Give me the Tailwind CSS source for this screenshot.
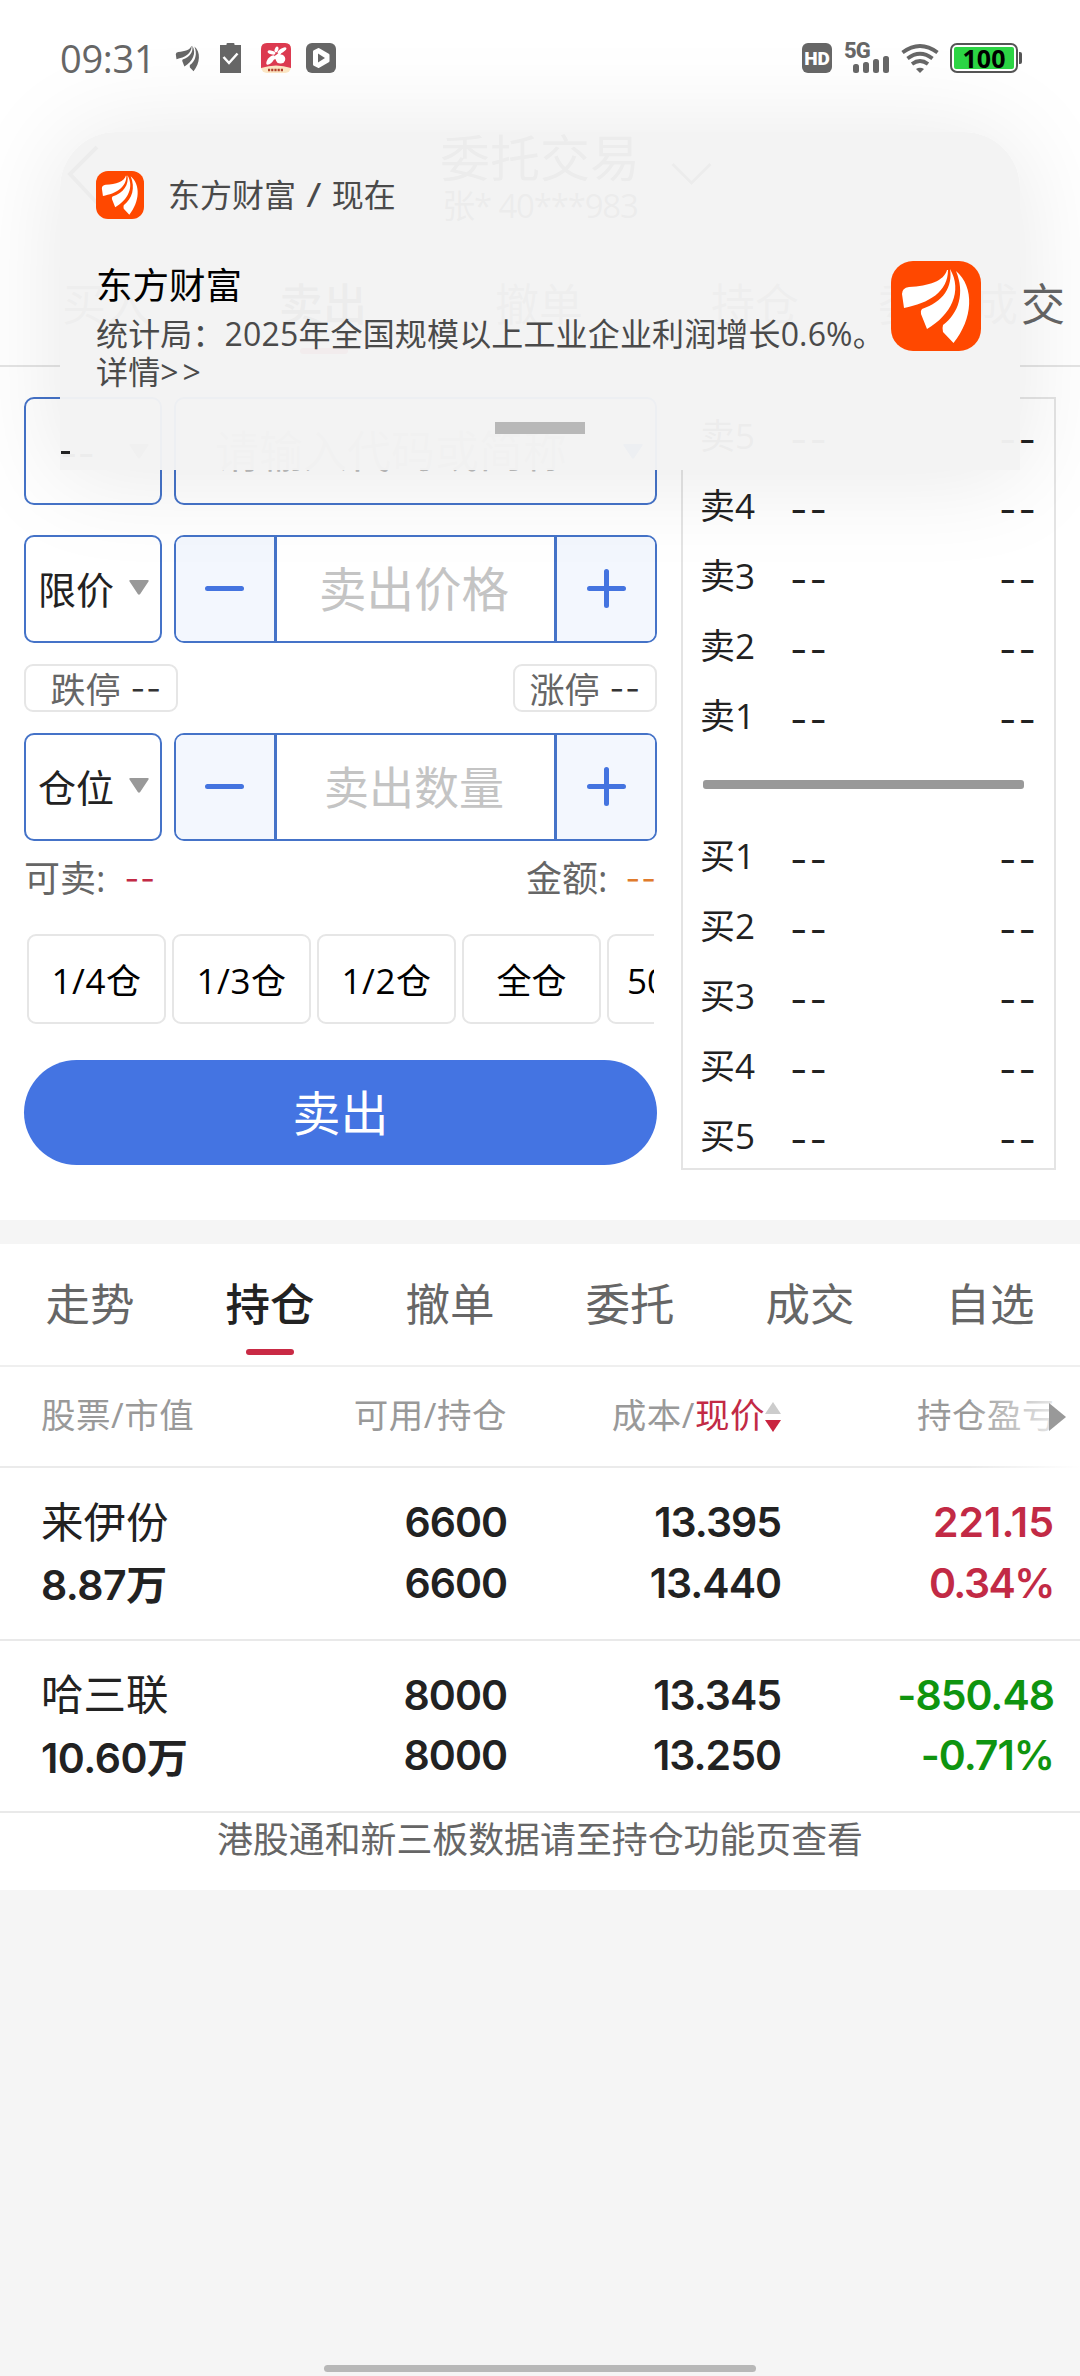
<!DOCTYPE html>
<html lang="zh-CN">
  <head>
    <meta charset="UTF-8" />
    <meta name="viewport" content="width=device-width, initial-scale=1.0" />
    <script src="https://cdn.jsdelivr.net/npm/@tailwindcss/browser@4"></script>
    <title>委托交易</title>
  </head>
  <body class="bg-white">
    <!-- shared icons -->
    <svg class="hidden">
      <symbol id="wing" viewBox="0 0 90 90">
        <path d="M56 9C53 20 38 25 18 26Q11 27 11 33L13 47C38 42 57 31 57 9z" />
        <path d="M59 8C62 26 52 41 31 48Q29 50 30 53L36 68C60 54 72 30 59 8z" />
        <path d="M65 10C74 32 68 52 52 64Q51 67 52 71L62.5 82C82 58 84 26 65 10z" />
      </symbol>
      <symbol id="caret" viewBox="0 0 20 15">
        <path d="M1.5 0h17q2 0 .8 1.8L11.200 14q-1.200 1.500-2.400 0L.7 1.800Q-.5 0 1.500 0z" />
      </symbol>
      <symbol id="plus" viewBox="0 0 39 39">
        <path d="M2.500 19.500h34M19.500 2.500v34" fill="none" stroke="currentColor" stroke-width="5" stroke-linecap="round" />
      </symbol>
      <symbol id="minus" viewBox="0 0 39 39">
        <path d="M2.500 19.500h34" fill="none" stroke="currentColor" stroke-width="5" stroke-linecap="round" />
      </symbol>
    </svg>

    <div class="relative flex h-[2376px] w-[1080px] flex-col overflow-hidden bg-white font-['Open_Sans','Noto_Sans_CJK_SC',sans-serif] text-[#222]">
      <!-- status bar -->
      <div class="relative z-20 flex h-[116px] shrink-0 items-center justify-between pr-[58px] pl-[60px] text-[#666]">
        <div class="flex items-center">
          <span class="w-[116px] text-[38px] leading-none font-medium tracking-[-0.300px]">09:31</span>
          <svg class="-ml-1 size-[31px] fill-current"><use href="#wing" /></svg>
          <svg class="ml-[17px] h-[30px] w-[21px]" viewBox="0 0 21 30">
            <path d="M0 2h6.500V1q0-1 1-1h6q1 0 1 1v1H21v28H0z" fill="#666" />
            <path d="M3.500 14l5.500 6 8.500-9.500" fill="none" stroke="#fff" stroke-width="2.500" />
          </svg>
          <svg class="ml-5 size-[30px]" viewBox="0 0 30 30">
            <rect width="30" height="30" rx="6" fill="#fbe6c4" />
            <path d="M6 0h18q6 0 6 6v19Q15 20 0 25V6Q0 0 6 0z" fill="#dc3a50" />
            <g fill="#fff">
              <ellipse cx="10.500" cy="9.500" rx="4" ry="1.900" transform="rotate(14 10.500 9.500)" />
              <ellipse cx="15.500" cy="6.500" rx="1.700" ry="3" transform="rotate(22 15.500 6.500)" />
              <ellipse cx="21" cy="7.500" rx="5" ry="2" transform="rotate(-32 21 7.500)" />
              <ellipse cx="9.500" cy="17" rx="5.800" ry="2.600" transform="rotate(-50 9.500 17)" />
              <ellipse cx="19.500" cy="16" rx="4.800" ry="4.500" />
              <path d="M8 17L22 7l-5 9z" />
            </g>
            <path d="M7 27h16" stroke="#b0402a" stroke-width="2.500" stroke-dasharray="2.200 1" />
          </svg>
          <svg class="ml-[15px] size-[30px]" viewBox="0 0 30 30">
            <rect width="30" height="30" rx="6" fill="#666" />
            <path d="M8.500 8.500v13l4 2 9.500-5.500v-6L12.500 6.500z" fill="#fff" stroke="#fff" stroke-width="3" stroke-linejoin="round" />
            <path d="M12 10.500l7 4.500-7 4.500z" fill="#666" />
          </svg>
        </div>
        <div class="flex items-center">
          <div class="flex h-[30px] w-[30px] items-center justify-center rounded-[6px] bg-[#666] font-['Roboto'] text-[19px] leading-none font-black text-white">HD</div>
          <div class="relative ml-3 h-[30px] w-[45px]">
            <span class="absolute -top-[3px] left-0 font-['Roboto'] text-[22px] leading-none font-extrabold tracking-[-1px]">5G</span>
            <svg class="absolute right-0 bottom-0 h-[17px] w-[36px]" viewBox="0 0 36 17" fill="#666">
              <rect x="0" y="8" width="6" height="9" rx="2.500" />
              <rect x="10" y="6" width="6" height="11" rx="2.500" />
              <rect x="20" y="3" width="6" height="14" rx="2.500" />
              <rect x="30" y="0" width="6" height="17" rx="2.500" />
            </svg>
          </div>
          <svg class="ml-3 h-[30px] w-[38px]" viewBox="0 0 38 30">
            <g fill="none" stroke="#666" stroke-width="3.800">
              <path d="M1.500 9.500Q19-3.500 36.500 9.500" />
              <path d="M6.500 15.500Q19 6 31.500 15.500" />
              <path d="M11 21Q19 15 27 21" />
            </g>
            <path d="M15 26q4-2.500 8 0l-4 4z" fill="#666" />
          </svg>
          <div class="ml-[11px] flex h-[30px] w-[68px] items-center justify-center rounded-[7px] border-2 border-[#555] bg-white p-[2px]">
            <div class="flex h-full w-full items-center justify-center rounded-[2px] bg-[#2cd544] font-['Open_Sans'] text-[25px] leading-none font-bold text-black">100</div>
          </div>
          <div class="ml-px h-[12px] w-[3px] rounded-r-[2px] bg-[#555]"></div>
        </div>
      </div>

      <!-- page header -->
      <div class="relative flex h-[120px] shrink-0 flex-col items-center pt-[17px]">
        <svg class="absolute top-[29px] left-[67px] h-[62px] w-[32px]" viewBox="0 0 32 62">
          <path d="M30 2L3 29l27 29" fill="none" stroke="#333" stroke-width="4" />
        </svg>
        <div class="text-[50px] leading-[50px]">委托交易</div>
        <div class="mt-[5px] text-[33px] leading-[36px] tracking-[-1.200px]">张* 40***983</div>
        <svg class="absolute top-[46px] left-[671px] h-[24px] w-[41px]" viewBox="0 0 41 24">
          <path d="M1.500 2l19 19 19-19" fill="none" stroke="#333" stroke-width="3" />
        </svg>
      </div>
      <div class="relative flex h-[131px] shrink-0 items-start border-b-2 border-[#e4e4e4] pt-[45px] pl-[62px] text-[44px] leading-[46px] text-[#666]">
        <div class="w-[217px]">买入</div>
        <div class="relative w-[216px] font-medium text-[#222]">
          卖出
          <div class="absolute top-[67px] left-[21px] h-[6px] w-[48px] rounded-full bg-[#c92a45]"></div>
        </div>
        <div class="w-[216px]">撤单</div>
        <div class="w-[167px]">持仓</div>
        <div class="w-[96px]">委托</div>
        <div class="tracking-[3px] whitespace-nowrap">成交</div>
      </div>

      <!-- order form and quotes -->
      <div class="flex h-[853px] shrink-0 gap-6 pt-[30px] pl-6">
        <div class="w-[633px]">
          <div class="flex gap-3">
            <div class="flex h-[108px] w-[138px] items-center justify-between rounded-[10px] border-2 border-[#4573c8] pr-[11px] pl-[34px]">
              <span class="pt-[3px] font-['Inter'] text-[38px] leading-none">--</span>
              <svg class="h-[15px] w-[20px] fill-[#999]"><use href="#caret" /></svg>
            </div>
            <div class="flex h-[108px] w-[483px] items-center justify-between rounded-[10px] border-2 border-[#4573c8] pr-[12px] pl-[39px]">
              <span class="text-[44px] leading-none text-[#bbb]">请输入代码或简称</span>
              <svg class="h-[15px] w-[20px] fill-[#4573c8]"><use href="#caret" /></svg>
            </div>
          </div>

          <div class="mt-[30px] flex gap-3">
            <div class="flex h-[108px] w-[138px] items-center justify-between rounded-[10px] border-2 border-[#4573c8] pr-[11px] pl-[12px]">
              <span class="text-[38px] leading-none">限价</span>
              <svg class="-mt-[3px] h-[15px] w-[20px] fill-[#999]"><use href="#caret" /></svg>
            </div>
            <div class="flex h-[108px] w-[483px] overflow-hidden rounded-[10px] border-2 border-[#4573c8]">
              <div class="flex w-[101px] items-center justify-center border-r-[3px] border-[#4573c8] bg-[#f3f7fe] text-[#4474e0]">
                <svg class="-mt-[2px] -ml-[2px] size-[39px]"><use href="#minus" /></svg>
              </div>
              <div class="flex flex-1 items-center justify-center pr-[3px] text-[47.500px] leading-none text-[#c4c4c4]">卖出价格</div>
              <div class="flex w-[101px] items-center justify-center border-l-[3px] border-[#4573c8] bg-[#f3f7fe] text-[#4474e0]">
                <svg class="-mt-[2px] size-[39px]"><use href="#plus" /></svg>
              </div>
            </div>
          </div>

          <div class="mt-[21px] flex justify-between text-[35px] leading-none text-[#666]">
            <div class="flex h-[48px] w-[154px] items-center justify-end gap-[10px] rounded-[9px] border-2 border-[#e6e6e6] pt-[2px] pr-[14px]">
              <span>跌停</span><span class="font-['Inter'] text-[32px] tracking-[1px] text-[#333]">--</span>
            </div>
            <div class="flex h-[48px] w-[144px] items-center justify-end gap-[10px] rounded-[9px] border-2 border-[#e6e6e6] pt-[2px] pr-[14px]">
              <span>涨停</span><span class="font-['Inter'] text-[32px] tracking-[1px] text-[#333]">--</span>
            </div>
          </div>

          <div class="mt-[21px] flex gap-3">
            <div class="flex h-[108px] w-[138px] items-center justify-between rounded-[10px] border-2 border-[#4573c8] pr-[11px] pl-[12px]">
              <span class="text-[38px] leading-none">仓位</span>
              <svg class="-mt-[3px] h-[15px] w-[20px] fill-[#999]"><use href="#caret" /></svg>
            </div>
            <div class="flex h-[108px] w-[483px] overflow-hidden rounded-[10px] border-2 border-[#4573c8]">
              <div class="flex w-[101px] items-center justify-center border-r-[3px] border-[#4573c8] bg-[#f3f7fe] text-[#4474e0]">
                <svg class="-mt-[2px] -ml-[2px] size-[39px]"><use href="#minus" /></svg>
              </div>
              <div class="flex flex-1 items-center justify-center pr-[3px] text-[45px] leading-none text-[#c4c4c4]">卖出数量</div>
              <div class="flex w-[101px] items-center justify-center border-l-[3px] border-[#4573c8] bg-[#f3f7fe] text-[#4474e0]">
                <svg class="-mt-[2px] size-[39px]"><use href="#plus" /></svg>
              </div>
            </div>
          </div>

          <div class="mt-[20px] flex justify-between text-[36px] leading-[36px] text-[#666]">
            <div class="flex gap-[19px]"><span>可卖:</span><span class="font-['Inter'] text-[32px] tracking-[1px] text-[#c22a45]">--</span></div>
            <div class="flex gap-[18px]"><span>金额:</span><span class="font-['Inter'] text-[32px] tracking-[1px] text-[#e07b2c]">--</span></div>
          </div>

          <div class="mt-[37px] ml-[3px] flex w-[627px] gap-[6px] overflow-hidden text-[35px] leading-none text-black">
            <div class="flex h-[90px] w-[139px] shrink-0 items-center justify-center rounded-[9px] border-2 border-[#e6e6e6] pt-[2px] tracking-[0.500px]">1/4仓</div>
            <div class="flex h-[90px] w-[139px] shrink-0 items-center justify-center rounded-[9px] border-2 border-[#e6e6e6] pt-[2px] tracking-[0.500px]">1/3仓</div>
            <div class="flex h-[90px] w-[139px] shrink-0 items-center justify-center rounded-[9px] border-2 border-[#e6e6e6] pt-[2px] tracking-[0.500px]">1/2仓</div>
            <div class="flex h-[90px] w-[139px] shrink-0 items-center justify-center rounded-[9px] border-2 border-[#e6e6e6] pt-[2px]">全仓</div>
            <div class="flex h-[90px] w-[139px] shrink-0 items-center rounded-[9px] border-2 border-[#e6e6e6] pt-[2px] pl-[18px]">500股</div>
          </div>

          <div class="mt-9 flex h-[105px] items-center justify-center rounded-full bg-[#4474e2] text-[48px] leading-none text-white">卖出</div>
        </div>

        <div class="flex h-[773px] w-[375px] flex-col border-2 border-[#e4e4e4] pr-[16px] pl-[17px] text-[35px] leading-none">
          <div class="flex h-[70px] shrink-0 items-center"><span class="w-[90px] pt-[2px]">卖5</span><span class="pt-[10px] font-['Inter'] text-[38px] tracking-[2px]">--</span><span class="ml-auto pt-[10px] font-['Inter'] text-[38px] tracking-[2px]">--</span></div>
          <div class="flex h-[70px] shrink-0 items-center"><span class="w-[90px] pt-[2px]">卖4</span><span class="pt-[10px] font-['Inter'] text-[38px] tracking-[2px]">--</span><span class="ml-auto pt-[10px] font-['Inter'] text-[38px] tracking-[2px]">--</span></div>
          <div class="flex h-[70px] shrink-0 items-center"><span class="w-[90px] pt-[2px]">卖3</span><span class="pt-[10px] font-['Inter'] text-[38px] tracking-[2px]">--</span><span class="ml-auto pt-[10px] font-['Inter'] text-[38px] tracking-[2px]">--</span></div>
          <div class="flex h-[70px] shrink-0 items-center"><span class="w-[90px] pt-[2px]">卖2</span><span class="pt-[10px] font-['Inter'] text-[38px] tracking-[2px]">--</span><span class="ml-auto pt-[10px] font-['Inter'] text-[38px] tracking-[2px]">--</span></div>
          <div class="flex h-[70px] shrink-0 items-center"><span class="w-[90px] pt-[2px]">卖1</span><span class="pt-[10px] font-['Inter'] text-[38px] tracking-[2px]">--</span><span class="ml-auto pt-[10px] font-['Inter'] text-[38px] tracking-[2px]">--</span></div>
          <div class="flex h-[70px] shrink-0 items-center pl-[3px]"><div class="h-[9px] w-[321px] rounded-[3px] bg-[#999]"></div></div>
          <div class="flex h-[70px] shrink-0 items-center"><span class="w-[90px] pt-[2px]">买1</span><span class="pt-[10px] font-['Inter'] text-[38px] tracking-[2px]">--</span><span class="ml-auto pt-[10px] font-['Inter'] text-[38px] tracking-[2px]">--</span></div>
          <div class="flex h-[70px] shrink-0 items-center"><span class="w-[90px] pt-[2px]">买2</span><span class="pt-[10px] font-['Inter'] text-[38px] tracking-[2px]">--</span><span class="ml-auto pt-[10px] font-['Inter'] text-[38px] tracking-[2px]">--</span></div>
          <div class="flex h-[70px] shrink-0 items-center"><span class="w-[90px] pt-[2px]">买3</span><span class="pt-[10px] font-['Inter'] text-[38px] tracking-[2px]">--</span><span class="ml-auto pt-[10px] font-['Inter'] text-[38px] tracking-[2px]">--</span></div>
          <div class="flex h-[70px] shrink-0 items-center"><span class="w-[90px] pt-[2px]">买4</span><span class="pt-[10px] font-['Inter'] text-[38px] tracking-[2px]">--</span><span class="ml-auto pt-[10px] font-['Inter'] text-[38px] tracking-[2px]">--</span></div>
          <div class="flex h-[70px] shrink-0 items-center"><span class="w-[90px] pt-[2px]">买5</span><span class="pt-[10px] font-['Inter'] text-[38px] tracking-[2px]">--</span><span class="ml-auto pt-[10px] font-['Inter'] text-[38px] tracking-[2px]">--</span></div>
        </div>
      </div>

      <div class="h-6 shrink-0 bg-[#f5f5f5]"></div>

      <!-- holdings -->
      <div class="grid h-[123px] shrink-0 grid-cols-6 border-b-2 border-[#efefef] pt-[37px] text-center text-[44.500px] leading-[46px] text-[#666]">
        <div>走势</div>
        <div class="flex flex-col items-center font-medium text-[#222]">
          持仓
          <div class="mt-[22px] h-[6px] w-[48px] rounded-full bg-[#c92a45]"></div>
        </div>
        <div>撤单</div>
        <div>委托</div>
        <div>成交</div>
        <div>自选</div>
      </div>
      <div class="relative grid h-[101px] shrink-0 grid-cols-[300px_207px_274px_299px] items-center border-b-2 border-[#ebebeb] pb-[3px] text-[34.500px] leading-none tracking-[0.500px] text-[#999]">
        <div class="pl-[41px]">股票/市值</div>
        <div class="text-right">可用/持仓</div>
        <div class="flex items-center justify-end">
          <span>成本/<span class="text-[#c22a45]">现价</span></span>
          <svg class="mt-[3px] h-[30px] w-[16px]" viewBox="0 0 16 30">
            <path d="M8 0l8 12H0z" fill="#ccc" />
            <path d="M0 18h16L8 30z" fill="#c9243f" />
          </svg>
        </div>
        <div class="pl-[136px] whitespace-nowrap">持仓盈亏</div>
        <div class="absolute top-0 right-0 h-[101px] w-[112px] bg-linear-to-r from-white/0 to-white"></div>
        <svg class="absolute top-[36px] right-[14px] h-[28px] w-[17px]" viewBox="0 0 17 28"><path d="M0 0l17 14L0 28z" fill="#999" /></svg>
      </div>

      <div class="grid h-[173px] shrink-0 grid-cols-[300px_207px_274px_273px] border-b-2 border-[#e9e9e9] pt-[24px] text-right font-['Inter','Noto_Sans_CJK_SC',sans-serif] text-[41px] leading-[61px] font-semibold tracking-[-1px]">
        <div class="pl-[41px] text-left"><div class="text-[42.500px] font-normal tracking-normal">来伊份</div><div class="pt-[2px] tracking-[-0.500px]">8.87万</div></div>
        <div><div>6600</div><div>6600</div></div>
        <div><div>13.395</div><div>13.440</div></div>
        <div class="text-[#c22a45]"><div class="tracking-normal">221.15</div><div class="tracking-[-1.500px]">0.34%</div></div>
      </div>
      <div class="grid h-[172px] shrink-0 grid-cols-[300px_207px_274px_273px] border-b-2 border-[#e9e9e9] pt-[24px] text-right font-['Inter','Noto_Sans_CJK_SC',sans-serif] text-[41px] leading-[60px] font-semibold tracking-[-1px]">
        <div class="pl-[41px] text-left"><div class="text-[42.500px] font-normal tracking-normal">哈三联</div><div class="pt-[3px] tracking-[-0.500px]">10.60万</div></div>
        <div><div>8000</div><div>8000</div></div>
        <div><div>13.345</div><div>13.250</div></div>
        <div class="text-[#0f940f]"><div>-850.48</div><div>-0.71%</div></div>
      </div>
      <div class="h-[77px] shrink-0 pt-[8px] text-center text-[35.900px] leading-[38px] text-[#666]">港股通和新三板数据请至持仓功能页查看</div>
      <div class="flex flex-1 items-end justify-center bg-[#f5f5f5] pb-1">
        <div class="h-[7px] w-[432px] rounded-full bg-[#b8b8b8]"></div>
      </div>

      <!-- heads-up notification over the page -->
      <div class="absolute top-[132px] left-[60px] z-10 h-[338px] w-[960px] rounded-t-[56px] bg-[#f3f3f3]/97 px-9 pt-[39px] text-[#4a4a4a] shadow-[0_4px_100px_6px_rgba(0,0,0,0.085)]">
        <div class="flex items-center text-[32px] leading-[48px]">
          <div class="size-[48px] rounded-[12px] bg-[#ff4800]"><svg class="size-[48px] fill-white"><use href="#wing" /></svg></div>
          <span class="ml-[24px]">东方财富<span class="mx-[12px] inline-block scale-x-130">/</span>现在</span>
        </div>
        <div class="mt-[42px] flex justify-between">
          <div class="w-[790px]">
            <div class="text-[36.500px] leading-[48px] text-black">东方财富</div>
            <div class="mt-[6px] text-[32px] leading-[38px] tracking-[0.150px] whitespace-nowrap">统计局：2025年全国规模以上工业企业利润增长0.6%。<br />详情<span class="tracking-[4px]">&gt;&gt;</span></div>
          </div>
          <div class="mr-[3px] size-[90px] shrink-0 rounded-[22px] bg-[#ff4800]"><svg class="size-[90px] fill-white"><use href="#wing" /></svg></div>
        </div>
        <div class="absolute top-[290px] left-[435px] h-[12px] w-[90px] bg-[#b8b8b8]"></div>
        <div class="absolute top-[319px] left-[1px] h-[3px] w-[9px] bg-[#222]"></div>
      </div>
    </div>
  </body>
</html>
